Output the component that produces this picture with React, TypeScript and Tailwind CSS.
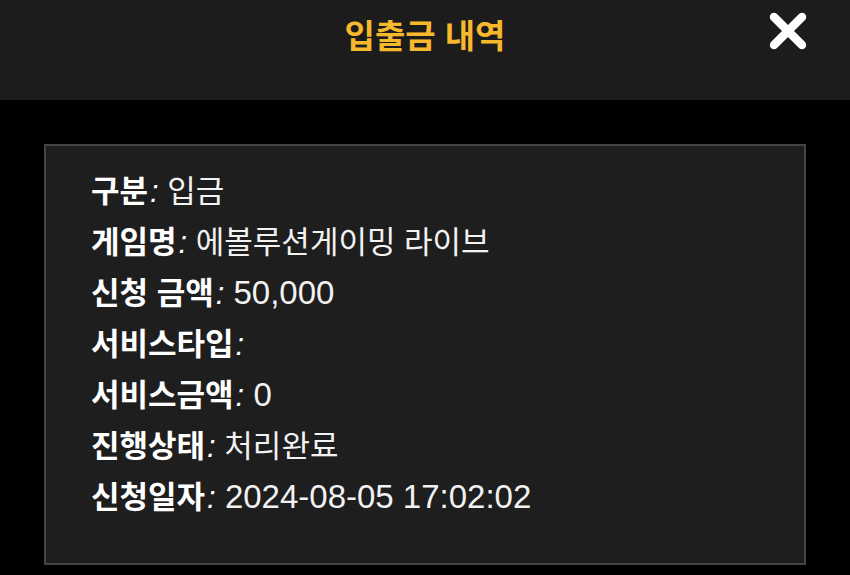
import React from "react";

const rows: { label: string; value: string; numeric?: boolean }[] = [
  { label: "구분", value: "입금" },
  { label: "게임명", value: "에볼루션게이밍 라이브" },
  { label: "신청 금액", value: "50,000", numeric: true },
  { label: "서비스타입", value: "" },
  { label: "서비스금액", value: "0", numeric: true },
  { label: "진행상태", value: "처리완료" },
  { label: "신청일자", value: "2024-08-05 17:02:02", numeric: true },
];

function CloseIcon() {
  return (
    <svg width="40" height="40" viewBox="0 0 40 40" aria-hidden="true">
      <path
        d="M6 6 L34 34 M34 6 L6 34"
        stroke="#ffffff"
        strokeWidth="8.5"
        strokeLinecap="round"
        fill="none"
      />
    </svg>
  );
}

export default function App() {
  return (
    <div
      className="w-[850px] h-[575px] bg-black overflow-hidden"
      style={{ fontFamily: '"Liberation Sans", "Noto Sans CJK KR", sans-serif' }}
    >
      <header className="relative h-[100px] bg-[#1c1c1c] flex items-start justify-center">
        <h1 className="mt-[16px] text-[33px] leading-[42px] font-bold text-[#f6b82c]">입출금 내역</h1>
        <button className="absolute right-[42px] top-[11px]">
          <CloseIcon />
        </button>
      </header>
      <div className="px-[44px] pt-[44px]">
        <div className="h-[421px] bg-[#1e1e1e] border-2 border-[#444444] pl-[45px] pt-[21px]">
          {rows.map((r) => (
            <div key={r.label} className="text-[31px] leading-[50.5px] text-white whitespace-nowrap">
              <span className="font-bold">{r.label}</span>
              <span className="italic ml-[2px]">:</span>
              {r.value && (
                <span className={r.numeric ? "text-[33px] text-[#f2f2f2]" : "text-[#f2f2f2]"}> {r.value}</span>
              )}
            </div>
          ))}
        </div>
      </div>
    </div>
  );
}
